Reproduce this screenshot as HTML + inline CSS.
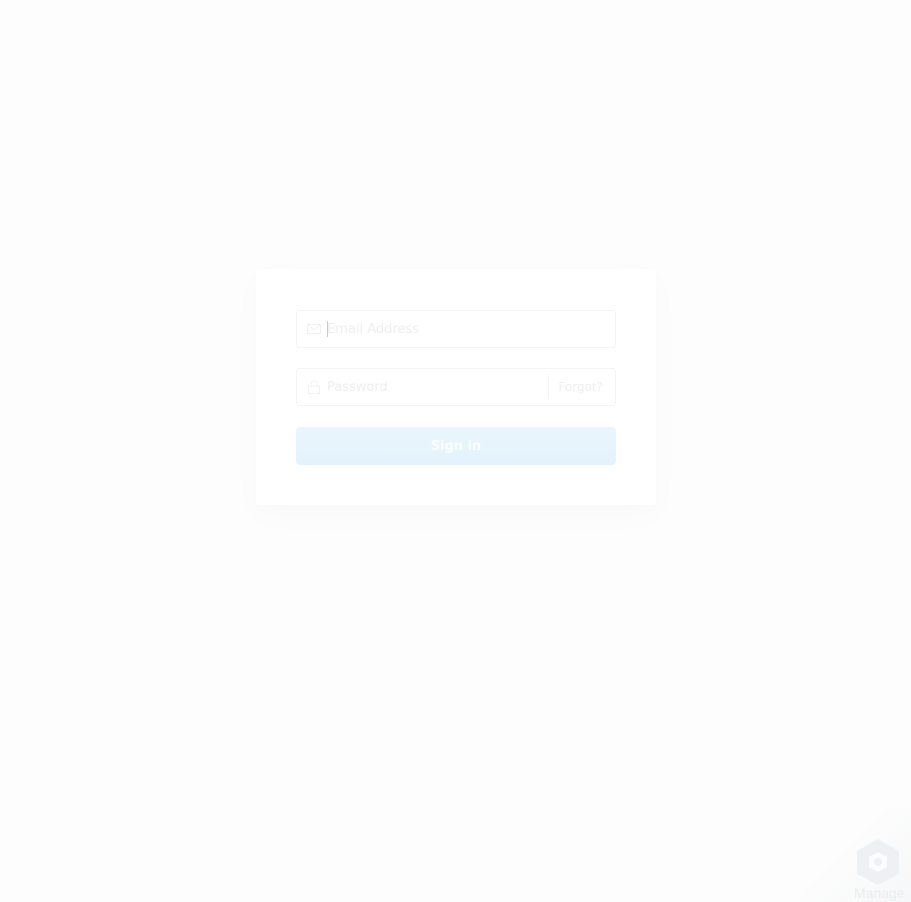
<!DOCTYPE html>
<html><head><meta charset="utf-8">
<style>
html,body{margin:0;padding:0;width:911px;height:902px;background:#fdfdfd;overflow:hidden;font-family:"DejaVu Sans","Liberation Sans",sans-serif;}
.card{position:absolute;left:256px;top:269px;width:400px;height:236px;background:#fff;border-radius:4px;box-shadow:0 10px 30px rgba(0,0,0,0.025);}
.in{position:absolute;left:40px;width:318px;height:36px;border:1px solid #f3f4f5;border-radius:4px;background:#fff;}
.ph{position:absolute;left:30px;top:11px;font-size:13px;color:#eceef0;}
.btn{position:absolute;left:40px;top:158px;width:320px;height:38px;border-radius:4px;background:linear-gradient(#eaf6fd,#e3f2fc);color:#fdfeff;font-size:13px;font-weight:bold;text-align:center;line-height:39px;}
.corner{position:absolute;right:0;bottom:0;width:110px;height:95px;background:linear-gradient(135deg,transparent 40%,#f6f7f8 100%);}
</style></head><body>
<div class="card">
  <div class="in" style="top:41px">
    <svg style="position:absolute;left:10px;top:13px" width="14" height="10" viewBox="0 0 14 10"><rect x="0.5" y="0.5" width="13" height="9" fill="none" stroke="#eef0f2"/><path d="M0.5 0.5L7 6L13.5 0.5" fill="none" stroke="#eef0f2"/></svg>
    <div style="position:absolute;left:30px;top:10px;width:1px;height:16px;background:#c9cbcd"></div>
    <div class="ph">Email Address</div>
  </div>
  <div class="in" style="top:99px">
    <svg style="position:absolute;left:11px;top:11px" width="12" height="14" viewBox="0 0 12 14"><path d="M3 6V4a3 3 0 0 1 6 0v2" fill="none" stroke="#f0f1f3"/><rect x="0.5" y="6" width="11" height="7.5" fill="none" stroke="#f0f1f3"/></svg>
    <div class="ph">Password</div>
    <div style="position:absolute;left:251px;top:6px;width:1px;height:24px;background:#f3f4f5"></div>
    <div style="position:absolute;right:12px;top:11px;font-size:12px;color:#eceef0">Forgot?</div>
  </div>
  <div class="btn">Sign in</div>
</div>
<div class="corner"></div>
<svg style="position:absolute;left:855px;top:838px" width="46" height="48" viewBox="0 0 46 48"><path d="M23 1L44 13V36L23 47L2 36V13Z" fill="#eef1f4"/><path d="M23 14L32 19V29L23 34L14 29V19Z" fill="#fbfcfd"/><circle cx="23" cy="24" r="4" fill="#eef1f4"/></svg>
<div style="position:absolute;left:854px;top:885px;font-family:'Liberation Sans',sans-serif;font-size:14px;color:#e9ecef">Manage</div>
</body></html>
